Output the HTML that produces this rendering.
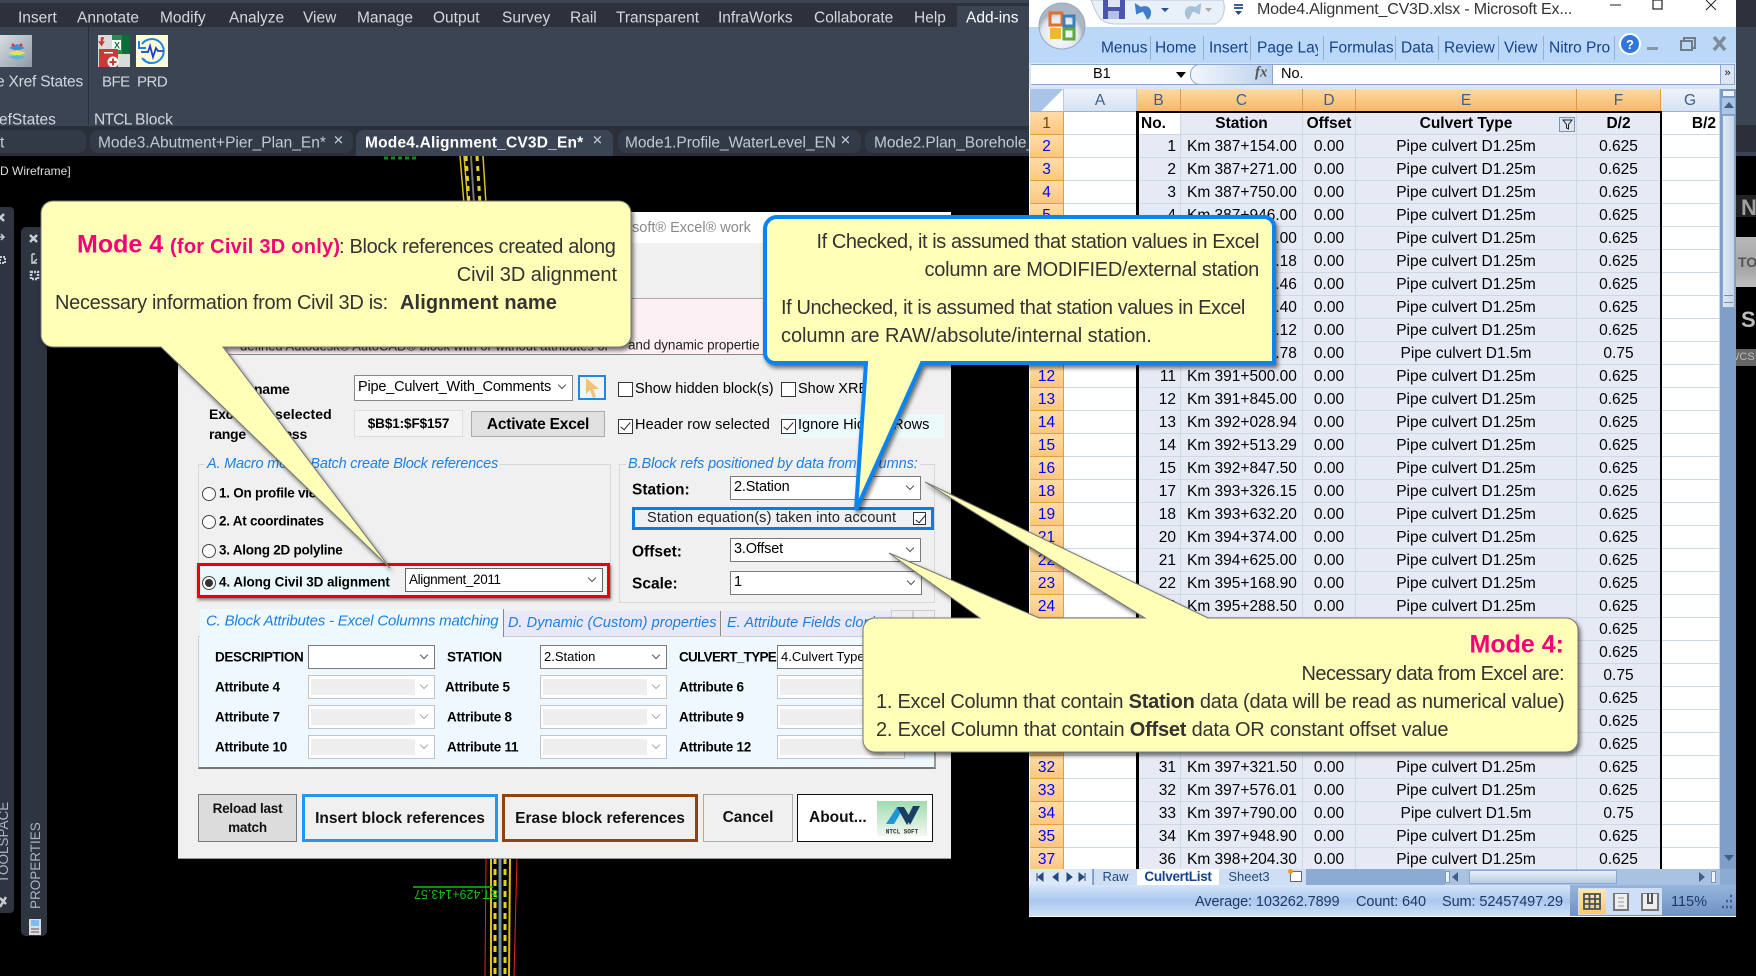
<!DOCTYPE html>
<html><head><meta charset="utf-8"><title>Mode 4</title>
<style>
html,body{margin:0;padding:0;background:#000}
body{position:relative;width:1756px;height:976px;overflow:hidden;font-family:"Liberation Sans",sans-serif;color:#000}
.a{position:absolute}
.t{position:absolute;white-space:nowrap;line-height:1;transform:translateY(-50%)}
.m{color:#d3d7de;font-size:15.5px;top:18px}
.tb{color:#c3c9d3;font-size:15.5px;top:143px;letter-spacing:-.05px}
.b{font-weight:bold}
.lb{font-weight:bold;font-size:13.5px;letter-spacing:-.25px}
.lg{color:#1e7fe0;font-style:italic;font-size:14.5px;letter-spacing:-.2px}
.c{position:absolute;background:#fff;border:1px solid #7a7a7a;box-sizing:border-box;height:24px;font-size:13px;line-height:21px;padding-left:3px;white-space:nowrap;overflow:hidden}
.c:after{content:"";position:absolute;right:7px;top:6px;width:5px;height:5px;border-right:1px solid #555;border-bottom:1px solid #555;transform:rotate(45deg)}
.d{border-color:#c4c4c4}
.d:before{content:"";position:absolute;left:2px;top:3px;bottom:3px;right:19px;background:#eeeeee}
.d:after{border-color:#aaa}
.k{position:absolute;width:13px;height:13px;background:#fff;border:1px solid #333;box-sizing:content-box}
.k.on:after{content:"";position:absolute;left:4px;top:0;width:4px;height:9px;border-right:1.5px solid #222;border-bottom:1.5px solid #222;transform:rotate(40deg)}
.r{position:absolute;left:202px;width:12px;height:12px;border:1px solid #444;border-radius:50%;background:#fff}
.btn{position:absolute;box-sizing:border-box;top:794px;height:48px;background:#f0f0f0;font-weight:bold;font-size:15.5px;text-align:center;line-height:44px;color:#111}
.ct{color:#333;font-size:20px;letter-spacing:-.05px}
table{border-collapse:separate;border-spacing:0;table-layout:fixed;width:690px;font-size:15.5px}
td{height:23px;box-sizing:border-box;padding:2px 0 0 0;white-space:nowrap;overflow:hidden;line-height:20px;border-bottom:1px solid #d0d7e5;border-right:1px solid #d0d7e5;background:#e6eaf5;text-align:center}
td.n{background:linear-gradient(#ffdca6,#fcc77f);color:#00f;border-bottom:1px solid #e89c3a;border-right:1px solid #e89c3a}
td.w{background:#fff}
td.no{text-align:right;padding-right:4px}
td.s{text-align:left;padding-left:6px}
tr.h td{font-weight:bold}
tr.h td.n{color:#6a4a1a;font-weight:normal}
tr.cols td{background:linear-gradient(#fcdba3,#f6b866);color:#3f5f8a;border-bottom:1px solid #d08a2a;border-right:1px solid #dc9a45}
tr.cols td.p{background:linear-gradient(#eef3fb,#d6e2f3);border-bottom:1px solid #9ab3d6;border-right:1px solid #b6c8e2}
.x{color:#15428b;font-size:15.5px;top:48px}
.sep{position:absolute;width:1px;background:#8fb0d8;top:36px;height:24px}
</style></head><body>

<!-- AutoCAD top -->
<div class="a" style="left:0;top:0;width:1030px;height:3px;background:#3d4554"></div>
<div class="a" style="left:0;top:3px;width:1030px;height:24px;background:#2c313c"></div>
<div class="a" style="left:0;top:27px;width:1030px;height:99px;background:#3b4453"></div>
<div class="a" style="left:957px;top:6px;width:73px;height:21px;background:#3b4453"></div>
<div class="a" style="left:0;top:126px;width:1030px;height:30px;background:#2a2f3a"></div>
<span class="t m" style="left:18px">Insert</span><span class="t m" style="left:77px">Annotate</span><span class="t m" style="left:160px">Modify</span><span class="t m" style="left:229px">Analyze</span><span class="t m" style="left:303px">View</span><span class="t m" style="left:357px">Manage</span><span class="t m" style="left:433px">Output</span><span class="t m" style="left:502px">Survey</span><span class="t m" style="left:570px">Rail</span><span class="t m" style="left:616px">Transparent</span><span class="t m" style="left:718px">InfraWorks</span><span class="t m" style="left:814px">Collaborate</span><span class="t m" style="left:914px">Help</span><span class="t m" style="left:966px;color:#fff">Add-ins</span>

<div class="a" style="left:88px;top:27px;width:1px;height:98px;background:#2a2f3a"></div>
<svg class="a" style="left:0;top:35px" width="32" height="32" viewBox="0 0 32 32"><defs><linearGradient id="xg" x1="0" y1="0" x2="1" y2="1"><stop offset="0" stop-color="#d8dde3"/><stop offset="1" stop-color="#8f99a6"/></linearGradient></defs><rect width="32" height="32" fill="url(#xg)"/><path d="M9 13l8-4 8 4-8 3z" fill="#3b8ede"/><circle cx="13" cy="10" r="1.5" fill="#d33"/><circle cx="21" cy="10" r="1.5" fill="#d33"/><path d="M8 18l9-3 9 3-9 3z" fill="#e8e25a"/><path d="M8 22l9-2 9 2-9 3z" fill="#58b7d8"/></svg>
<svg class="a" style="left:98px;top:35px" width="32" height="32" viewBox="0 0 32 32"><rect width="32" height="32" fill="#d9dbd9"/><rect x="14" y="0" width="18" height="19" fill="#1f8f4f"/><rect x="24" y="0" width="8" height="19" fill="#0f6b39"/><rect x="14" y="5" width="9" height="10" fill="#fff"/><text x="16" y="13.5" font-size="9" font-weight="bold" fill="#136c3b" font-family="Liberation Sans">X</text><rect x="1" y="14" width="19" height="18" fill="#c93a36"/><path d="M6 3H3.500V9M3.500 10l-2-3h4z" stroke="#c93a36" stroke-width="1.500" fill="#c93a36"/><circle cx="15" cy="27" r="5.500" fill="#fff"/><path d="M15 23.500v7M11.500 27h7" stroke="#c93a36" stroke-width="2"/><rect x="6" y="17" width="9" height="1.500" fill="#fff"/></svg>
<svg class="a" style="left:136px;top:35px" width="32" height="32" viewBox="0 0 32 32"><rect width="32" height="32" fill="#fdfbd9"/><path d="M6 9a12 12 0 1 1 0 14" fill="none" stroke="#1f86df" stroke-width="2"/><path d="M3 6v7h7" fill="none" stroke="#1f86df" stroke-width="2"/><path d="M5 17h7l2-6 3 11 3-9 2 3h5" fill="none" stroke="#1a3fd0" stroke-width="1.800"/><path d="M8 24l2 3M12 28h3" stroke="#1f86df" stroke-width="2" stroke-dasharray="2 2"/></svg>
<span class="t m" style="left:-4px;top:82px;letter-spacing:-.2px">e Xref States</span><span class="t m" style="left:102px;top:82px;font-size:15px;letter-spacing:-.5px">BFE</span><span class="t m" style="left:137px;top:82px;font-size:15px;letter-spacing:-.5px">PRD</span>
<div class="a" style="left:0;top:108px;width:200px;height:18px;overflow:hidden"><span class="t m" style="left:-1px;top:12px">efStates</span><span class="t m" style="left:94px;top:12px;letter-spacing:-.7px">NTCL</span><span class="t m" style="left:135px;top:12px">Block</span></div>

<!-- doc tabs -->
<div class="a" style="left:0;top:130px;width:86px;height:23px;background:#333a47;border-radius:0 8px 8px 0"></div>
<div class="a" style="left:90px;top:130px;width:263px;height:23px;background:#333a47;border-radius:8px"></div>
<div class="a" style="left:356px;top:130px;width:257px;height:26px;background:#3b4453;border-radius:8px 8px 0 0"></div>
<div class="a" style="left:618px;top:130px;width:243px;height:23px;background:#333a47;border-radius:8px"></div>
<div class="a" style="left:865px;top:130px;width:170px;height:23px;background:#333a47;border-radius:8px 0 0 8px"></div>
<span class="t tb" style="left:0">t</span>
<span class="t tb" style="left:98px;letter-spacing:0">Mode3.Abutment+Pier_Plan_En*</span><span class="t tb" style="left:333px;top:140px;font-size:13px">✕</span>
<span class="t tb b" style="left:365px;color:#fff;letter-spacing:.2px">Mode4.Alignment_CV3D_En*</span><span class="t tb" style="left:592px;top:140px;font-size:13px">✕</span>
<span class="t tb" style="left:625px">Mode1.Profile_WaterLevel_EN</span><span class="t tb" style="left:840px;top:140px;font-size:13px">✕</span>
<div class="a" style="left:865px;top:130px;width:165px;height:26px;overflow:hidden"><span class="t tb" style="left:9px;top:13px">Mode2.Plan_Borehole_En</span></div>
<span class="t" style="left:0;top:171px;color:#ddd;font-size:12px">D Wireframe]</span>

<!-- canvas -->
<svg class="a" style="left:0;top:156px" width="1030" height="820" viewBox="0 156 1030 820">
<path d="M384 158h32" fill="none" stroke="#15c515" stroke-width="3" stroke-dasharray="4 3" opacity=".7"/>
<path d="M460 156l4 48M464 156l4 48M483 156l3 48" stroke="#d9c21c" stroke-width="1.500" fill="none"/>
<path d="M466 156l3 48M477 156l3 48" stroke="#e5cf2a" stroke-width="3" stroke-dasharray="5 5" fill="none"/>
<path d="M471 156l3 48" stroke="#777" stroke-width="2" fill="none"/>
<path d="M486 858l-1 118M517 858l-3 118" stroke="#e22" stroke-width="1" fill="none"/>
<path d="M491 858v118M510 858l-1 118" stroke="#d9c21c" stroke-width="2" fill="none"/>
<path d="M495 858v118M505 858v118" stroke="#e5cf2a" stroke-width="3" stroke-dasharray="6 5" fill="none"/>
<path d="M500 858v118" stroke="#6d8fa0" stroke-width="3" fill="none"/>
<path d="M413 887h80" stroke="#12c012" stroke-width="1.500"/>
</svg>
<span class="a" style="left:414px;top:888px;color:#11bb11;font-size:12.500px;line-height:12px;transform:rotate(180deg);white-space:nowrap">ST.429+143.57</span>

<!-- left panels -->
<div class="a" style="left:-6px;top:207px;width:20px;height:706px;background:#2e3440;border-radius:4px"></div>
<div class="a" style="left:21px;top:227px;width:26px;height:709px;background:#2e3440;border-radius:5px"></div>
<svg class="a" style="left:0;top:210px" width="47" height="75" viewBox="0 0 47 75"><path d="M-3 4l7 7M4 4l-7 7M30 25l7 7M37 25l-7 7" stroke="#c8ccd2" stroke-width="2.500"/><path d="M-2 27h6M1 24l3 3-3 3M32 44v9h5M32 44h3M37 49l-4 4" stroke="#c8ccd2" stroke-width="1.500" fill="none"/><path d="M0 47h5v6h-5z" fill="none" stroke="#c8ccd2" stroke-width="2" stroke-dasharray="2 1"/><path d="M31 62h7v7h-7z" fill="none" stroke="#c8ccd2" stroke-width="2.500" stroke-dasharray="2 1"/></svg>
<span class="a" style="left:-3px;top:883px;color:#a8b6c6;font-size:13.5px;transform-origin:0 0;transform:rotate(-90deg);white-space:nowrap;line-height:14px">TOOLSPACE</span>
<span class="a" style="left:28px;top:909px;color:#a8b6c6;font-size:13.5px;transform-origin:0 0;transform:rotate(-90deg);white-space:nowrap;line-height:16px">PROPERTIES</span>
<svg class="a" style="left:0;top:892px" width="47" height="44" viewBox="0 0 47 44"><path d="M0 6l6 6M6 5L0 15" stroke="#c8ccd2" stroke-width="2.500" fill="none"/><rect x="29" y="27" width="12" height="16" fill="#ddd"/><rect x="31" y="28" width="8" height="6" fill="#79bdfb"/><path d="M31 37h8M31 40h8" stroke="#555"/></svg>

<!-- Dialog -->
<div class="a" style="left:178px;top:212px;width:773px;height:646px;background:#f0f0f0;border-bottom:1px solid #999"></div>
<div class="a" style="left:178px;top:212px;width:773px;height:31px;background:#fff"></div>
<span class="t" style="left:632px;top:228px;color:#8a8a8a;font-size:14.500px">soft® Excel® work</span>
<div class="a" style="left:178px;top:298px;width:773px;height:57px;background:#fdf0f5;border-top:1px solid #aaa;border-bottom:1px solid #888;box-sizing:border-box"></div>
<span class="t" style="left:240px;top:346px;color:#333;font-size:13px">defined Autodesk® AutoCAD® block with or without attributes or</span><span class="t" style="left:628px;top:345px;color:#222;font-size:13.500px;letter-spacing:-.1px">and dynamic propertie</span>

<span class="t lb" style="left:254px;top:389px;font-size:14px">name</span>
<span class="t lb" style="left:209px;top:414px;font-size:14px">Excel</span><span class="t lb" style="left:275px;top:414px;font-size:14px;letter-spacing:.1px">selected</span>
<span class="t lb" style="left:209px;top:434px;font-size:14px">range</span><span class="t lb" style="right:1449px;top:434px;font-size:14px">address</span>
<div class="c" style="left:354px;top:375px;width:219px;height:26px;font-size:14.500px;line-height:23px;letter-spacing:-.2px;border-color:#888">Pipe_Culvert_With_Comments</div>
<div class="a" style="left:578px;top:375px;width:28px;height:25px;background:#f4f4f4;border:2px solid #1e88e5;box-sizing:border-box"></div>
<svg class="a" style="left:583px;top:377px" width="18" height="22" viewBox="0 0 18 22"><path d="M3 1l13 11h-6l3 8-3 1-3-8-4 4z" fill="#f3c272"/></svg>
<div class="k" style="left:618px;top:382px"></div><span class="t" style="left:635px;top:389px;font-size:14.500px">Show hidden block(s)</span>
<div class="k" style="left:781px;top:382px"></div><span class="t" style="left:798px;top:389px;font-size:14.500px">Show XRE</span>
<div class="a" style="left:354px;top:410px;width:109px;height:27px;background:#f4f4f4;border:1px solid #ddd;box-sizing:border-box;text-align:center;font-weight:bold;font-size:13.500px;line-height:25px;letter-spacing:-.1px">$B$1:$F$157</div>
<div class="a" style="left:471px;top:411px;width:134px;height:26px;background:#e1e1e1;border:1px solid #adadad;box-sizing:border-box;text-align:center;font-weight:bold;font-size:15.500px;line-height:26px;letter-spacing:-.2px">Activate Excel</div>
<div class="k on" style="left:618px;top:419px"></div><span class="t" style="left:635px;top:425px;font-size:14.500px;letter-spacing:.1px">Header row selected</span>
<div class="a" style="left:781px;top:414px;width:163px;height:24px;background:#ecfafc"></div>
<div class="k on" style="left:781px;top:419px"></div><span class="t" style="left:798px;top:425px;font-size:14.500px">Ignore Hidden Rows</span>

<div class="a" style="left:198px;top:464px;width:413px;height:134px;border:1px solid #d8d8d8;box-sizing:border-box"></div>
<div class="a" style="left:619px;top:464px;width:316px;height:139px;border:1px solid #d8d8d8;box-sizing:border-box"></div>
<span class="t lg" style="left:205px;top:464px;background:#f0f0f0;padding:0 2px">A. Macro mode: Batch create Block references</span>
<span class="t lg" style="left:626px;top:464px;background:#f0f0f0;padding:0 2px;letter-spacing:-.1px">B.Block refs positioned by data from columns:</span>
<div class="r" style="top:487px"></div><span class="t lb" style="left:219px;top:493px">1. On profile view</span>
<div class="r" style="top:515px"></div><span class="t lb" style="left:219px;top:521px">2. At coordinates</span>
<div class="r" style="top:544px"></div><span class="t lb" style="left:219px;top:550px">3. Along 2D polyline</span>
<div class="a" style="left:197px;top:563px;width:413px;height:35px;border:3px solid #e8000b;box-sizing:border-box;box-shadow:1px 2px 3px rgba(0,0,0,.5)"></div>
<div class="a" style="left:200px;top:567px;width:191px;height:27px;background:#e9f8fb"></div>
<div class="r" style="top:576px"></div><div class="a" style="left:205px;top:579px;width:8px;height:8px;border-radius:50%;background:#333"></div>
<span class="t lb" style="left:219px;top:582px;letter-spacing:-.1px">4. Along Civil 3D alignment</span>
<div class="c" style="left:405px;top:568px;width:198px;height:24px;font-size:13.500px;letter-spacing:-.35px;border-color:#666">Alignment_2011</div>

<span class="t b" style="left:632px;top:490px;font-size:15.500px">Station:</span>
<div class="c" style="left:730px;top:476px;width:191px;font-size:14.500px;letter-spacing:-.2px">2.Station</div>
<div class="a" style="left:632px;top:507px;width:302px;height:23px;border:3px solid #0f7be0;box-sizing:border-box;background:#f0f0f0"></div>
<span class="t" style="left:647px;top:518px;font-size:14.500px;color:#222;letter-spacing:.15px">Station equation(s) taken into account</span>
<div class="k on" style="left:913px;top:512px;width:11px;height:11px"></div>
<span class="t b" style="left:632px;top:552px;font-size:15.500px">Offset:</span>
<div class="c" style="left:730px;top:538px;width:191px;font-size:14.500px;letter-spacing:-.2px">3.Offset</div>
<span class="t b" style="left:632px;top:584px;font-size:15.500px">Scale:</span>
<div class="c" style="left:730px;top:571px;width:192px;font-size:14.500px">1</div>

<!-- tabs -->
<div class="a" style="left:198px;top:636px;width:738px;height:133px;background:#f0f8ff;border:1px solid #ccc;border-bottom:2px solid #777;border-right:2px solid #999;box-sizing:border-box"></div>
<div class="a" style="left:200px;top:609px;width:303px;height:28px;background:#eef9ff;border-right:1px solid #888"></div>
<div class="a" style="left:504px;top:611px;width:216px;height:25px;background:#e8e8f8;border-right:1px solid #888"></div>
<div class="a" style="left:722px;top:611px;width:170px;height:25px;background:#e8e8f8"></div>
<div class="a" style="left:891px;top:610px;width:22px;height:24px;background:#eee;border:1px solid #ccc;box-sizing:border-box"></div>
<div class="a" style="left:913px;top:610px;width:22px;height:24px;background:#eee;border:1px solid #ccc;box-sizing:border-box"></div>
<span class="t lg" style="left:206px;top:621px;letter-spacing:-.2px;font-size:15px">C. Block Attributes - Excel Columns matching</span>
<span class="t lg" style="left:508px;top:623px;letter-spacing:.05px">D. Dynamic (Custom) properties</span>
<span class="t lg" style="left:727px;top:623px;letter-spacing:0">E. Attribute Fields cloning</span>

<span class="t lb" style="left:215px;top:657px;letter-spacing:-.35px">DESCRIPTION</span>
<span class="t lb" style="left:215px;top:687px">Attribute 4</span>
<span class="t lb" style="left:215px;top:717px">Attribute 7</span>
<span class="t lb" style="left:215px;top:747px">Attribute 10</span>
<span class="t lb" style="left:447px;top:657px;letter-spacing:-.35px">STATION</span>
<span class="t lb" style="left:445px;top:687px">Attribute 5</span>
<span class="t lb" style="left:447px;top:717px">Attribute 8</span>
<span class="t lb" style="left:447px;top:747px">Attribute 11</span>
<span class="t lb" style="left:679px;top:657px;letter-spacing:-.7px">CULVERT_TYPE</span>
<span class="t lb" style="left:679px;top:687px">Attribute 6</span>
<span class="t lb" style="left:679px;top:717px">Attribute 9</span>
<span class="t lb" style="left:679px;top:747px">Attribute 12</span>
<div class="c" style="left:308px;top:645px;width:127px"></div>
<div class="c d" style="left:308px;top:675px;width:127px"></div>
<div class="c d" style="left:308px;top:705px;width:127px"></div>
<div class="c d" style="left:308px;top:735px;width:127px"></div>
<div class="c" style="left:540px;top:645px;width:127px">2.Station</div>
<div class="c d" style="left:540px;top:675px;width:127px"></div>
<div class="c d" style="left:540px;top:705px;width:127px"></div>
<div class="c d" style="left:540px;top:735px;width:127px"></div>
<div class="c" style="left:777px;top:645px;width:128px">4.Culvert Type</div>
<div class="c d" style="left:777px;top:675px;width:128px"></div>
<div class="c d" style="left:777px;top:705px;width:128px"></div>
<div class="c d" style="left:777px;top:735px;width:128px"></div>

<div class="btn" style="left:198px;width:99px;background:#dcdcdc;border:1px solid #777;font-size:13.500px;line-height:19px;padding-top:4px;letter-spacing:-.2px">Reload last<br>match</div>
<div class="btn" style="left:302px;width:196px;border:3px solid #2196f3">Insert block references</div>
<div class="btn" style="left:502px;width:196px;border:3px solid #8b4513">Erase block references</div>
<div class="btn" style="left:703px;width:90px;border:1px solid #adadad;line-height:46px">Cancel</div>
<div class="btn" style="left:797px;width:136px;background:#fff;border:1.500px solid #111;text-align:left;padding-left:11px;line-height:45px">About...</div>
<svg class="a" style="left:877px;top:801px" width="50" height="35" viewBox="0 0 50 35"><defs><linearGradient id="lg" x1="0" y1="0" x2="0" y2="1"><stop offset="0" stop-color="#9fdcb0"/><stop offset="1" stop-color="#f3f8f2"/></linearGradient></defs><rect width="50" height="35" fill="url(#lg)"/><path d="M9 23L20 6h7l-10 17z" fill="#1e96d6"/><path d="M20 6h7l7 12-4 6z" fill="#1a3d63"/><path d="M30 17L36 5h7l-10 19z" fill="#1a3d63"/><text x="25" y="32.500" font-size="6" text-anchor="middle" font-weight="bold" fill="#333" font-family="Liberation Mono">NTCL SOFT</text></svg>

<!-- right strip -->
<div class="a" style="left:1736px;top:0;width:20px;height:27px;background:#2c313c"></div>
<div class="a" style="left:1736px;top:27px;width:20px;height:98px;background:#3b4453"></div>
<div class="a" style="left:1736px;top:125px;width:20px;height:27px;background:#2a2f3a"></div>
<div class="a" style="left:1736px;top:152px;width:20px;height:4px;background:#3b4453"></div>
<div class="a" style="left:1736px;top:195px;width:20px;height:22px;background:#222"></div>
<span class="t b" style="left:1741px;top:208px;color:#a0a0a0;font-size:22px">N</span>
<div class="a" style="left:1736px;top:237px;width:20px;height:50px;background:linear-gradient(#b8b8b8,#a4a4a4 60%,#c0c0c0)"></div>
<div class="a" style="left:1736px;top:237px;width:20px;height:50px;overflow:hidden"><span class="t b" style="left:2px;top:25px;color:#555;font-size:14px">TOP</span></div>
<span class="t b" style="left:1741px;top:320px;color:#bbb;font-size:22px">S</span>
<div class="a" style="left:1736px;top:349px;width:20px;height:17px;background:#666;overflow:hidden;color:#bbb;font-size:11px;line-height:17px;text-indent:-7px">WCS</div>

<!-- Excel -->
<div class="a" style="left:1029px;top:0;width:707px;height:917px;background:#fff"></div>
<div class="a" style="left:1029px;top:27px;width:707px;height:36px;background:#bcd8f8"></div>
<div class="a" style="left:1029px;top:63px;width:707px;height:26px;background:#dbe6f5"></div>
<div class="a" style="left:1031px;top:64px;width:690px;height:21px;background:#fff;border-top:1px solid #8aa8cf;border-bottom:1px solid #8aa8cf;box-sizing:border-box"></div>
<svg class="a" style="left:1029px;top:0" width="200" height="62" viewBox="0 0 200 62"><defs><radialGradient id="og" cx=".45" cy=".7"><stop offset="0" stop-color="#fff"/><stop offset=".8" stop-color="#dfe8ef"/><stop offset="1" stop-color="#aab6c4"/></radialGradient></defs><path d="M62 0c6 14 8 24 24 24h100c9-4 11-16 8-24z" fill="#e9f0fa" stroke="#b8c8dc"/><circle cx="33" cy="26" r="23" fill="url(#og)" stroke="#9aa8b8"/><rect x="21" y="13" width="12" height="12" fill="none" stroke="#e0702a" stroke-width="3"/><rect x="35" y="16" width="10" height="10" fill="none" stroke="#3a7fc0" stroke-width="3"/><rect x="21" y="28" width="11" height="11" fill="#f2b632"/><rect x="35" y="29" width="10" height="10" fill="none" stroke="#5fa83a" stroke-width="3"/><rect x="74" y="0" width="22" height="19" fill="#4a55b0"/><rect x="79" y="0" width="12" height="7" fill="#dfe4f5"/><rect x="79" y="11" width="11" height="8" fill="#b6c0e4"/><path d="M112 8c9-4 12 6 6 11M107 5l1 8 7-3z" fill="#3f7ec9" stroke="#3f7ec9" stroke-width="2"/><path d="M132 8h8l-4 4z" fill="#2a4f90"/><path d="M166 8c-9-4-12 6-6 11M171 5l-1 8-7-3z" fill="#a8c0d8" stroke="#a8c0d8" stroke-width="2"/><path d="M176 8h7l-3.500 4z" fill="#aaa"/></svg>
<svg class="a" style="left:1232px;top:4px" width="14" height="14" viewBox="0 0 14 14"><path d="M2 1h9M2 4h9" stroke="#3a5f9a" stroke-width="2"/><path d="M3 7h7l-3.500 4z" fill="#27467a"/></svg>
<span class="t" style="left:1257px;top:10px;font-size:16px;color:#333;letter-spacing:-.2px">Mode4.Alignment_CV3D.xlsx - Microsoft Ex...</span>
<svg class="a" style="left:1610px;top:0" width="120" height="14" viewBox="0 0 120 14"><path d="M0 5h11" stroke="#222"/><rect x="43" y="0" width="9" height="9" fill="none" stroke="#222" stroke-width="1.200"/><path d="M96 0l10 10M106 0L96 10" stroke="#222"/></svg>
<span class="t x" style="left:1101px">Menus</span><span class="t x" style="left:1155px">Home</span><span class="t x" style="left:1209px">Insert</span>
<div class="a" style="left:1257px;top:37px;width:61px;height:22px;overflow:hidden"><span class="t x" style="left:0;top:11px">Page Layout</span></div>
<span class="t x" style="left:1329px">Formulas</span><span class="t x" style="left:1401px">Data</span><span class="t x" style="left:1444px">Review</span><span class="t x" style="left:1504px">View</span><span class="t x" style="left:1549px">Nitro Pro</span>
<div class="sep" style="left:1150px"></div><div class="sep" style="left:1203px"></div><div class="sep" style="left:1250px"></div><div class="sep" style="left:1323px"></div><div class="sep" style="left:1395px"></div><div class="sep" style="left:1438px"></div><div class="sep" style="left:1498px"></div><div class="sep" style="left:1543px"></div><div class="sep" style="left:1614px"></div>
<svg class="a" style="left:1618px;top:30px" width="115" height="30" viewBox="0 0 115 30"><circle cx="12" cy="14" r="10" fill="#2f78d8" stroke="#fff" stroke-width="2"/><text x="12" y="19" font-size="13" font-weight="bold" fill="#fff" text-anchor="middle" font-family="Liberation Sans">?</text><rect x="16" y="16" width="0" height="0"/><rect x="15" y="17" width="0" height="0"/><rect x="16" y="17" width="0" height="0"/><rect x="15" y="17" width="0" height="0"/><rect x="15" y="17" width="0" height="0"/><rect x="15" y="17" width="0" height="0"/><rect x="15" y="17" width="0" height="0"/><rect x="15" y="17" width="0" height="0"/><rect x="15" y="17" width="0" height="0"/><rect x="15" y="17" width="0" height="0"/><rect x="15" y="17" width="0" height="0"/><rect x="29" y="17" width="11" height="3" fill="#8a97a8"/><rect x="66" y="8" width="11" height="10" fill="none" stroke="#6f7c8c" stroke-width="2"/><rect x="63" y="11" width="11" height="9" fill="#bcd8f8" stroke="#6f7c8c" stroke-width="2"/><path d="M96 7l11 13M107 7L96 20" stroke="#7f8c9c" stroke-width="3.500"/></svg>
<span class="t" style="left:1093px;top:74px;font-size:14.500px">B1</span>
<div class="a" style="left:1176px;top:72px;width:0;height:0;border:5px solid transparent;border-top:6px solid #000"></div>
<div class="a" style="left:1190px;top:64px;width:83px;height:21px;background:linear-gradient(90deg,#f2f6fc,#bcd2ec);border-radius:10px 0 0 10px;border:1px solid #8aa8cf;box-sizing:border-box"></div>
<span class="t" style="left:1255px;top:73px;font-family:'Liberation Serif',serif;font-style:italic;font-size:15px;color:#555"><b>fx</b></span>
<span class="t" style="left:1281px;top:74px;font-size:14.500px">No.</span>
<div class="a" style="left:1720px;top:64px;width:15px;height:21px;background:#dbe6f5;border:1px solid #8aa8cf;box-sizing:border-box;text-align:center;font-size:11px;line-height:17px;color:#111">»</div>

<div class="a" style="left:1030px;top:89px;width:690px;height:780px;overflow:hidden">
<table>
<colgroup><col style="width:34px"><col style="width:73px"><col style="width:44px"><col style="width:122px"><col style="width:53px"><col style="width:221px"><col style="width:84px"><col style="width:59px"></colgroup>
<tr class="cols"><td class="p" style="background:linear-gradient(135deg,#a9c4e8 60%,#fff 61%)"></td><td class="p">A</td><td>B</td><td>C</td><td>D</td><td>E</td><td>F</td><td class="p">G</td></tr>
<tr class="h"><td class="n">1</td><td class="w"></td><td class="w" style="text-align:left;padding-left:4px">No.</td><td>Station</td><td>Offset</td><td>Culvert Type</td><td>D/2</td><td class="w" style="text-align:right;padding-right:3px">B/2</td></tr>
<tr><td class="n">2</td><td class="w"></td><td class="no">1</td><td class="s">Km 387+154.00</td><td>0.00</td><td>Pipe culvert D1.25m</td><td>0.625</td><td class="w"></td></tr>
<tr><td class="n">3</td><td class="w"></td><td class="no">2</td><td class="s">Km 387+271.00</td><td>0.00</td><td>Pipe culvert D1.25m</td><td>0.625</td><td class="w"></td></tr>
<tr><td class="n">4</td><td class="w"></td><td class="no">3</td><td class="s">Km 387+750.00</td><td>0.00</td><td>Pipe culvert D1.25m</td><td>0.625</td><td class="w"></td></tr>
<tr><td class="n">5</td><td class="w"></td><td class="no">4</td><td class="s">Km 387+946.00</td><td>0.00</td><td>Pipe culvert D1.25m</td><td>0.625</td><td class="w"></td></tr>
<tr><td class="n">6</td><td class="w"></td><td class="no">5</td><td class="s">Km 388+100.00</td><td>0.00</td><td>Pipe culvert D1.25m</td><td>0.625</td><td class="w"></td></tr>
<tr><td class="n">7</td><td class="w"></td><td class="no">6</td><td class="s">Km 388+500.18</td><td>0.00</td><td>Pipe culvert D1.25m</td><td>0.625</td><td class="w"></td></tr>
<tr><td class="n">8</td><td class="w"></td><td class="no">7</td><td class="s">Km 389+100.46</td><td>0.00</td><td>Pipe culvert D1.25m</td><td>0.625</td><td class="w"></td></tr>
<tr><td class="n">9</td><td class="w"></td><td class="no">8</td><td class="s">Km 389+600.40</td><td>0.00</td><td>Pipe culvert D1.25m</td><td>0.625</td><td class="w"></td></tr>
<tr><td class="n">10</td><td class="w"></td><td class="no">9</td><td class="s">Km 390+200.12</td><td>0.00</td><td>Pipe culvert D1.25m</td><td>0.625</td><td class="w"></td></tr>
<tr><td class="n">11</td><td class="w"></td><td class="no">10</td><td class="s">Km 390+900.78</td><td>0.00</td><td>Pipe culvert D1.5m</td><td>0.75</td><td class="w"></td></tr>
<tr><td class="n">12</td><td class="w"></td><td class="no">11</td><td class="s">Km 391+500.00</td><td>0.00</td><td>Pipe culvert D1.25m</td><td>0.625</td><td class="w"></td></tr>
<tr><td class="n">13</td><td class="w"></td><td class="no">12</td><td class="s">Km 391+845.00</td><td>0.00</td><td>Pipe culvert D1.25m</td><td>0.625</td><td class="w"></td></tr>
<tr><td class="n">14</td><td class="w"></td><td class="no">13</td><td class="s">Km 392+028.94</td><td>0.00</td><td>Pipe culvert D1.25m</td><td>0.625</td><td class="w"></td></tr>
<tr><td class="n">15</td><td class="w"></td><td class="no">14</td><td class="s">Km 392+513.29</td><td>0.00</td><td>Pipe culvert D1.25m</td><td>0.625</td><td class="w"></td></tr>
<tr><td class="n">16</td><td class="w"></td><td class="no">15</td><td class="s">Km 392+847.50</td><td>0.00</td><td>Pipe culvert D1.25m</td><td>0.625</td><td class="w"></td></tr>
<tr><td class="n">18</td><td class="w"></td><td class="no">17</td><td class="s">Km 393+326.15</td><td>0.00</td><td>Pipe culvert D1.25m</td><td>0.625</td><td class="w"></td></tr>
<tr><td class="n">19</td><td class="w"></td><td class="no">18</td><td class="s">Km 393+632.20</td><td>0.00</td><td>Pipe culvert D1.25m</td><td>0.625</td><td class="w"></td></tr>
<tr><td class="n">21</td><td class="w"></td><td class="no">20</td><td class="s">Km 394+374.00</td><td>0.00</td><td>Pipe culvert D1.25m</td><td>0.625</td><td class="w"></td></tr>
<tr><td class="n">22</td><td class="w"></td><td class="no">21</td><td class="s">Km 394+625.00</td><td>0.00</td><td>Pipe culvert D1.25m</td><td>0.625</td><td class="w"></td></tr>
<tr><td class="n">23</td><td class="w"></td><td class="no">22</td><td class="s">Km 395+168.90</td><td>0.00</td><td>Pipe culvert D1.25m</td><td>0.625</td><td class="w"></td></tr>
<tr><td class="n">24</td><td class="w"></td><td class="no">23</td><td class="s">Km 395+288.50</td><td>0.00</td><td>Pipe culvert D1.25m</td><td>0.625</td><td class="w"></td></tr>
<tr><td class="n">25</td><td class="w"></td><td class="no"></td><td></td><td></td><td></td><td>0.625</td><td class="w"></td></tr>
<tr><td class="n">26</td><td class="w"></td><td class="no"></td><td></td><td></td><td></td><td>0.625</td><td class="w"></td></tr>
<tr><td class="n">27</td><td class="w"></td><td class="no"></td><td></td><td></td><td></td><td>0.75</td><td class="w"></td></tr>
<tr><td class="n">28</td><td class="w"></td><td class="no"></td><td></td><td></td><td></td><td>0.625</td><td class="w"></td></tr>
<tr><td class="n">29</td><td class="w"></td><td class="no"></td><td></td><td></td><td></td><td>0.625</td><td class="w"></td></tr>
<tr><td class="n">30</td><td class="w"></td><td class="no"></td><td></td><td></td><td></td><td>0.625</td><td class="w"></td></tr>
<tr><td class="n">32</td><td class="w"></td><td class="no">31</td><td class="s">Km 397+321.50</td><td>0.00</td><td>Pipe culvert D1.25m</td><td>0.625</td><td class="w"></td></tr>
<tr><td class="n">33</td><td class="w"></td><td class="no">32</td><td class="s">Km 397+576.01</td><td>0.00</td><td>Pipe culvert D1.25m</td><td>0.625</td><td class="w"></td></tr>
<tr><td class="n">34</td><td class="w"></td><td class="no">33</td><td class="s">Km 397+790.00</td><td>0.00</td><td>Pipe culvert D1.5m</td><td>0.75</td><td class="w"></td></tr>
<tr><td class="n">35</td><td class="w"></td><td class="no">34</td><td class="s">Km 397+948.90</td><td>0.00</td><td>Pipe culvert D1.25m</td><td>0.625</td><td class="w"></td></tr>
<tr><td class="n">37</td><td class="w"></td><td class="no">36</td><td class="s">Km 398+204.30</td><td>0.00</td><td>Pipe culvert D1.25m</td><td>0.625</td><td class="w"></td></tr>
</table>
</div>
<div class="a" style="left:1136px;top:111px;width:3px;height:758px;background:#000"></div>
<div class="a" style="left:1660px;top:111px;width:2px;height:758px;background:#000"></div>
<div class="a" style="left:1136px;top:111px;width:526px;height:2px;background:#000"></div>
<div class="a" style="left:1559px;top:117px;width:16px;height:15px;background:#dfe6f2;border:1px solid #7a93b8;box-sizing:border-box"></div>
<svg class="a" style="left:1560px;top:118px" width="14" height="13" viewBox="0 0 14 13"><path d="M3 2h9L8.500 6.500V11L6.500 10V6.500z" fill="none" stroke="#222"/></svg>
<!-- v scroll -->
<div class="a" style="left:1720px;top:89px;width:16px;height:780px;background:#7f9fc8"></div>
<div class="a" style="left:1722px;top:90px;width:13px;height:7px;background:#eef4fb;border:1px solid #7a98c0;box-sizing:border-box"></div>
<div class="a" style="left:1722px;top:98px;width:13px;height:16px;background:#a9c4e4"></div>
<div class="a" style="left:1724px;top:102px;width:0;height:0;border:5px solid transparent;border-bottom:6px solid #3f5f8a;border-top:0"></div>
<div class="a" style="left:1722px;top:115px;width:13px;height:193px;background:linear-gradient(90deg,#dfe9f5,#c5d5ea);border:1px solid #8aa6cc;box-sizing:border-box"></div>
<div class="a" style="left:1724px;top:295px;width:9px;height:6px;border-top:1px solid #7a8ca6;border-bottom:1px solid #7a8ca6"></div>
<div class="a" style="left:1724px;top:855px;width:0;height:0;border:5px solid transparent;border-top:6px solid #3f5f8a;border-bottom:0"></div>
<!-- sheet tabs -->
<div class="a" style="left:1030px;top:869px;width:706px;height:16px;background:#8cabd3"></div>
<div class="a" style="left:1030px;top:869px;width:62px;height:16px;background:#dce8f7"></div>
<svg class="a" style="left:1034px;top:871px" width="56" height="12" viewBox="0 0 56 12"><path d="M3 2v8M9 2v8L4 6zM24 2v8l-5-4zM33 2v8l5-4zM45 2v8l5-4zM51 2v8" fill="#24497f" stroke="#24497f"/></svg>
<div class="a" style="left:1093px;top:869px;width:44px;height:16px;background:#cfdff3;border-left:1px solid #7a98c0;box-sizing:border-box;text-align:center;font-size:13px;line-height:16px;color:#24497f">Raw</div>
<div class="a" style="left:1137px;top:869px;width:82px;height:16px;background:#fff;box-sizing:border-box;text-align:center;font-size:13.500px;font-weight:bold;line-height:16px;color:#15428b;letter-spacing:-.3px">CulvertList</div>
<div class="a" style="left:1219px;top:869px;width:60px;height:16px;background:#cfdff3;text-align:center;font-size:13px;line-height:16px;color:#24497f">Sheet3</div>
<div class="a" style="left:1279px;top:869px;width:27px;height:16px;background:#cfdff3"></div>
<div class="a" style="left:1290px;top:871px;width:12px;height:11px;background:#fff;border:1px solid #667;box-sizing:border-box"></div>
<div class="a" style="left:1288px;top:869px;width:5px;height:5px;background:#e8a020;border-radius:50%"></div>
<div class="a" style="left:1445px;top:869px;width:275px;height:16px;background:#a9c2e2"></div>
<div class="a" style="left:1445px;top:871px;width:5px;height:12px;background:#eef4fb;border:1px solid #7a98c0;box-sizing:border-box"></div>
<div class="a" style="left:1469px;top:870px;width:148px;height:14px;background:linear-gradient(#e9f0f9,#b9cbe3);border:1px solid #8aa6cc;box-sizing:border-box"></div>
<div class="a" style="left:1452px;top:872px;width:0;height:0;border:5px solid transparent;border-right:6px solid #3f5f8a;border-left:0"></div>
<div class="a" style="left:1699px;top:872px;width:0;height:0;border:5px solid transparent;border-left:6px solid #3f5f8a;border-right:0"></div>
<div class="a" style="left:1711px;top:871px;width:5px;height:12px;background:#eef4fb;border:1px solid #7a98c0;box-sizing:border-box"></div>
<!-- status -->
<div class="a" style="left:1029px;top:885px;width:707px;height:32px;background:linear-gradient(#d5e5f9,#a9c8ef 50%,#cfe0f6);border-bottom:1px solid #fff;box-sizing:border-box"></div>
<span class="t" style="left:1195px;top:902px;font-size:14.500px;color:#1f3a63;letter-spacing:-.1px">Average: 103262.7899</span>
<span class="t" style="left:1356px;top:902px;font-size:14.500px;color:#1f3a63;letter-spacing:-.1px">Count: 640</span>
<span class="t" style="left:1442px;top:902px;font-size:14.500px;color:#1f3a63;letter-spacing:-.1px">Sum: 52457497.29</span>
<div class="a" style="left:1570px;top:885px;width:166px;height:31px;background:linear-gradient(#97b4dc,#6f92c4)"></div>
<div class="a" style="left:1578px;top:888px;width:84px;height:27px;background:#cfe0f6"></div>
<div class="a" style="left:1579px;top:889px;width:27px;height:25px;background:linear-gradient(#ffe9a8,#fcc870)"></div>
<svg class="a" style="left:1582px;top:893px" width="78" height="18" viewBox="0 0 78 18"><path d="M2 1h16v15H2zM2 6h16M2 11h16M7.500 1v15M13 1v15" fill="none" stroke="#44505f" stroke-width="1.800"/><rect x="32" y="0" width="14" height="17" fill="#eee" stroke="#777" stroke-width="2"/><path d="M36 5h6M36 9h6M36 13h6" stroke="#999"/><rect x="60" y="0" width="16" height="17" fill="#eee" stroke="#777" stroke-width="2"/><path d="M66 0v10h4V0" fill="none" stroke="#555" stroke-width="2"/></svg>
<span class="t" style="left:1671px;top:902px;font-size:14.500px;color:#1f3a63">115%</span>
<svg class="a" style="left:1718px;top:892px" width="16" height="20" viewBox="0 0 16 20"><path d="M12 4h2M8 9h2M12 9h2M4 15h2M8 15h2M12 15h2" stroke="#3f5f8a" stroke-width="2.500"/></svg>

<!-- Callouts -->
<svg class="a" style="left:0;top:0;filter:drop-shadow(2px 3px 2px rgba(0,0,0,.55))" width="1756" height="976" viewBox="0 0 1756 976">
<path d="M53 201H619a12 12 0 0 1 12 12V335a12 12 0 0 1-12 12H223L390 568 161 347H53a12 12 0 0 1-12-12V213a12 12 0 0 1 12-12z" fill="#ffffb8" stroke="#777" stroke-width="1"/>
<path d="M777 217H1264a10 10 0 0 1 10 10V363H922L856 510 866 363H775a10 10 0 0 1-10-10V229a12 12 0 0 1 12-12z" fill="#ffffb8" stroke="#0a84f0" stroke-width="4"/>
<path d="M875 618H980L889 553 1039 618H1145L925 482 1208 618H1566a12 12 0 0 1 12 12V740a12 12 0 0 1-12 12H875a12 12 0 0 1-12-12V630a12 12 0 0 1 12-12z" fill="#ffffb8" stroke="#777" stroke-width="1"/>
</svg>

<span class="t b" style="left:77px;top:245px;font-size:25px;color:#f5007a">Mode 4</span>
<span class="t b" style="left:170px;top:247px;font-size:20px;color:#f5007a;letter-spacing:.25px">(for Civil 3D only)</span>
<span class="t ct" style="left:339px;top:247px;letter-spacing:-.32px">: Block references created along</span>
<span class="t ct" style="right:1139px;top:275px">Civil 3D alignment</span>
<span class="t ct" style="left:55px;top:303px;letter-spacing:-.3px">Necessary information from Civil 3D is:</span>
<span class="t ct b" style="left:400px;top:303px;letter-spacing:.1px">Alignment name</span>

<span class="t ct" style="right:497px;top:242px;letter-spacing:-.43px">If Checked, it is assumed that station values in Excel</span>
<span class="t ct" style="right:497px;top:270px;letter-spacing:-.25px">column are MODIFIED/external station</span>
<span class="t ct" style="left:781px;top:308px;letter-spacing:-.41px">If Unchecked, it is assumed that station values in Excel</span>
<span class="t ct" style="left:781px;top:336px">column are RAW/absolute/internal station.</span>

<span class="t b" style="right:192px;top:645px;font-size:25px;color:#f5007a">Mode 4:</span>
<span class="t ct" style="right:192px;top:674px;letter-spacing:-.55px">Necessary data from Excel are:</span>
<span class="t ct" style="left:876px;top:702px;letter-spacing:-.26px">1. Excel Column that contain <b>Station</b> data (data will be read as numerical value)</span>
<span class="t ct" style="left:876px;top:730px;letter-spacing:-.22px">2. Excel Column that contain <b>Offset</b> data OR constant offset value</span>

</body></html>
